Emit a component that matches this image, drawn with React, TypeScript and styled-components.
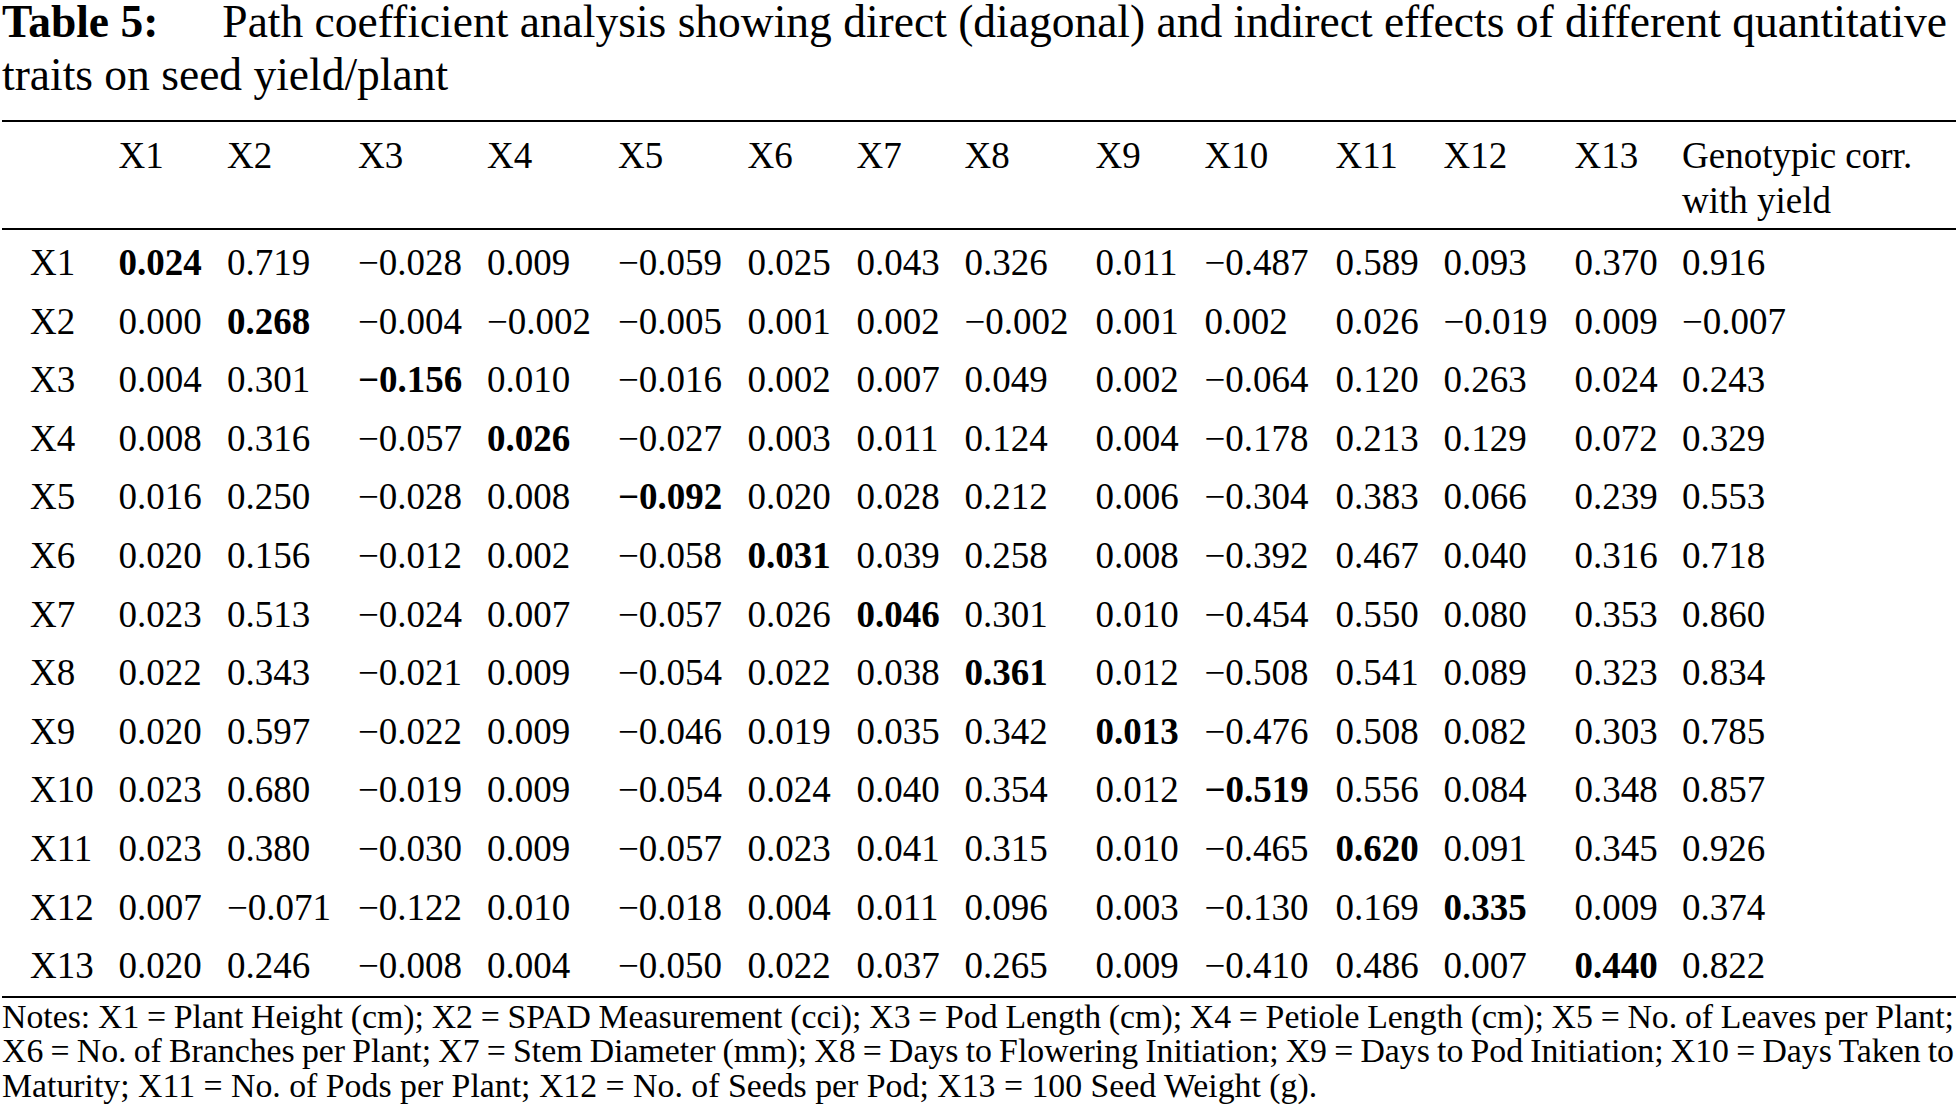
import React from "react";
import styled, { createGlobalStyle } from "styled-components";

const GlobalStyle = createGlobalStyle`
  html, body {
    margin: 0;
    padding: 0;
    background: #ffffff;
  }
  body {
    font-family: "Liberation Serif", "Times New Roman", serif;
    color: #000000;
  }
`;

const Page = styled.div`
  width: 1956px;
  height: 1110px;
  overflow: hidden;
  box-sizing: border-box;
  padding: 0 0 0 2px;
  display: flex;
  flex-direction: column;
`;

const Title = styled.h1`
  margin: -5px 0 0 0;
  font-size: 45.5px;
  line-height: 53px;
  font-weight: 400;
  letter-spacing: 0;
`;

const TitleLabel = styled.span`
  font-weight: 700;
  margin-right: 64px;
`;

const Table = styled.table`
  margin-top: 19px;
  width: 1954px;
  border-collapse: collapse;
  table-layout: fixed;
  font-size: 37px;
  border-top: 2px solid #000;
  border-bottom: 2px solid #000;
`;

const HeadRow = styled.tr`
  border-bottom: 2px solid #000;
`;

const HeadCell = styled.th<{ $first?: boolean }>`
  text-align: left;
  vertical-align: top;
  font-weight: 400;
  line-height: 45px;
  padding: 11px 0 5px ${(p) => (p.$first ? "28px" : "0")};
  white-space: pre-line;
`;

const BodyRow = styled.tr`
  &:last-child td {
    padding-bottom: 4px;
  }
`;

const LabelCell = styled.td`
  text-align: left;
  padding: 7px 0 0 28px;
  line-height: 51.6px;
  white-space: nowrap;
`;

const ValueCell = styled.td<{ $bold?: boolean }>`
  text-align: left;
  padding: 7px 0 0 0;
  line-height: 51.6px;
  white-space: nowrap;
  font-weight: ${(p) => (p.$bold ? 700 : 400)};
`;

const Notes = styled.div`
  margin-top: 2px;
  font-size: 33.8px;
  line-height: 34.4px;
  width: 1952px;
`;

const NoteLine = styled.div<{ $justify?: boolean }>`
  white-space: nowrap;
  word-spacing: ${(p) => (p.$justify ? "-2.5px" : "0")};
  text-align: ${(p) => (p.$justify ? "justify" : "left")};
  text-align-last: ${(p) => (p.$justify ? "justify" : "left")};
`;

const widths = [116.5, 108.5, 131, 129, 131, 129.5, 109, 108, 131, 109, 131, 108, 131, 107.5];

const headers = [
  "X1", "X2", "X3", "X4", "X5", "X6", "X7", "X8", "X9", "X10", "X11", "X12", "X13",
  "Genotypic corr.\nwith yield",
];

const rows: string[][] = [
  ["0.024", "0.719", "−0.028", "0.009", "−0.059", "0.025", "0.043", "0.326", "0.011", "−0.487", "0.589", "0.093", "0.370", "0.916"],
  ["0.000", "0.268", "−0.004", "−0.002", "−0.005", "0.001", "0.002", "−0.002", "0.001", "0.002", "0.026", "−0.019", "0.009", "−0.007"],
  ["0.004", "0.301", "−0.156", "0.010", "−0.016", "0.002", "0.007", "0.049", "0.002", "−0.064", "0.120", "0.263", "0.024", "0.243"],
  ["0.008", "0.316", "−0.057", "0.026", "−0.027", "0.003", "0.011", "0.124", "0.004", "−0.178", "0.213", "0.129", "0.072", "0.329"],
  ["0.016", "0.250", "−0.028", "0.008", "−0.092", "0.020", "0.028", "0.212", "0.006", "−0.304", "0.383", "0.066", "0.239", "0.553"],
  ["0.020", "0.156", "−0.012", "0.002", "−0.058", "0.031", "0.039", "0.258", "0.008", "−0.392", "0.467", "0.040", "0.316", "0.718"],
  ["0.023", "0.513", "−0.024", "0.007", "−0.057", "0.026", "0.046", "0.301", "0.010", "−0.454", "0.550", "0.080", "0.353", "0.860"],
  ["0.022", "0.343", "−0.021", "0.009", "−0.054", "0.022", "0.038", "0.361", "0.012", "−0.508", "0.541", "0.089", "0.323", "0.834"],
  ["0.020", "0.597", "−0.022", "0.009", "−0.046", "0.019", "0.035", "0.342", "0.013", "−0.476", "0.508", "0.082", "0.303", "0.785"],
  ["0.023", "0.680", "−0.019", "0.009", "−0.054", "0.024", "0.040", "0.354", "0.012", "−0.519", "0.556", "0.084", "0.348", "0.857"],
  ["0.023", "0.380", "−0.030", "0.009", "−0.057", "0.023", "0.041", "0.315", "0.010", "−0.465", "0.620", "0.091", "0.345", "0.926"],
  ["0.007", "−0.071", "−0.122", "0.010", "−0.018", "0.004", "0.011", "0.096", "0.003", "−0.130", "0.169", "0.335", "0.009", "0.374"],
  ["0.020", "0.246", "−0.008", "0.004", "−0.050", "0.022", "0.037", "0.265", "0.009", "−0.410", "0.486", "0.007", "0.440", "0.822"],
];

export default function App() {
  return (
    <>
      <GlobalStyle />
      <Page>
        <Title>
          <TitleLabel>Table 5:</TitleLabel>Path coefficient analysis showing direct (diagonal) and indirect effects of different quantitative traits on seed yield/plant
        </Title>
        <Table>
          <colgroup>
            {widths.map((w, i) => (
              <col key={i} style={{ width: `${w}px` }} />
            ))}
            <col />
          </colgroup>
          <thead>
            <HeadRow>
              <HeadCell $first />
              {headers.map((h) => (
                <HeadCell key={h}>{h}</HeadCell>
              ))}
            </HeadRow>
          </thead>
          <tbody>
            {rows.map((r, i) => (
              <BodyRow key={i}>
                <LabelCell>X{i + 1}</LabelCell>
                {r.map((v, j) => (
                  <ValueCell key={j} $bold={i === j}>
                    {v}
                  </ValueCell>
                ))}
              </BodyRow>
            ))}
          </tbody>
        </Table>
        <Notes>
          <NoteLine $justify>
            Notes: X1 = Plant Height (cm); X2 = SPAD Measurement (cci); X3 = Pod Length (cm); X4 = Petiole Length (cm); X5 = No. of Leaves per Plant;
          </NoteLine>
          <NoteLine $justify>
            X6 = No. of Branches per Plant; X7 = Stem Diameter (mm); X8 = Days to Flowering Initiation; X9 = Days to Pod Initiation; X10 = Days Taken to
          </NoteLine>
          <NoteLine>Maturity; X11 = No. of Pods per Plant; X12 = No. of Seeds per Pod; X13 = 100 Seed Weight (g).</NoteLine>
        </Notes>
      </Page>
    </>
  );
}
